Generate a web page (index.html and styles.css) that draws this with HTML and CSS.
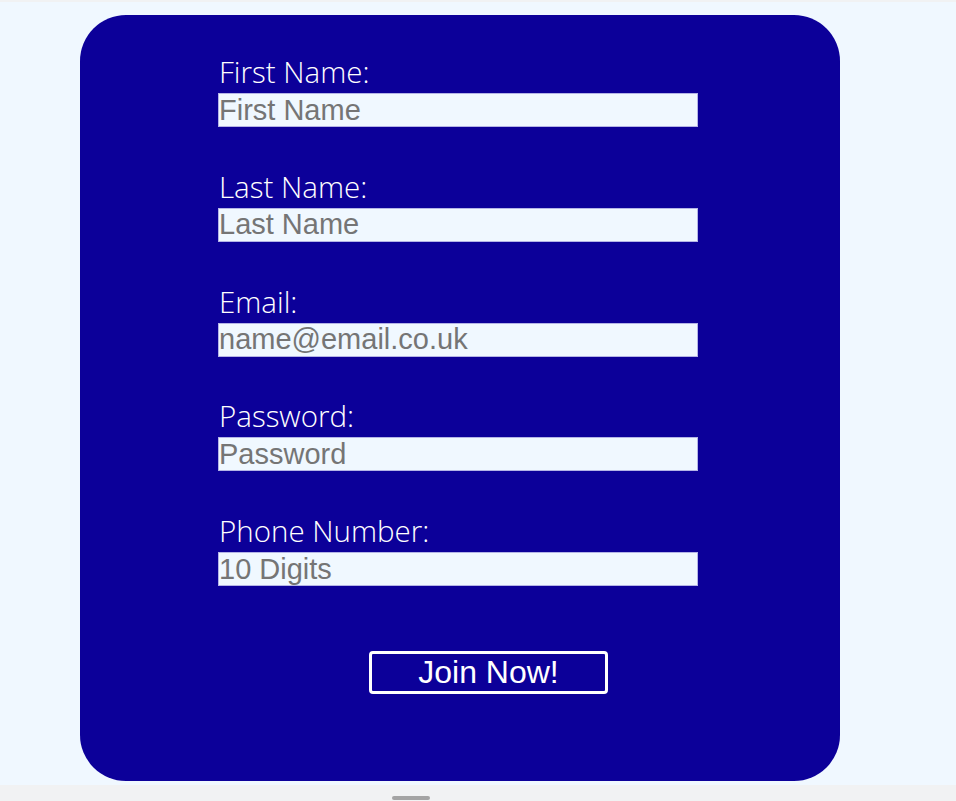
FILE: index.html
```html
<!DOCTYPE html>
<html lang="en">
<head>
    <meta charset="UTF-8">
    <meta name="viewport" content="width=device-width, initial-scale=1.0">
    <title>Join Now</title>
    <link rel="stylesheet" href="styles.css">
</head>
<body>
    <div class="page">
        <form class="signup-card" onsubmit="return false;">
            <div class="field">
                <label for="firstName">First Name:</label>
                <input type="text" id="firstName" placeholder="First Name">
            </div>
            <div class="field">
                <label for="lastName">Last Name:</label>
                <input type="text" id="lastName" placeholder="Last Name">
            </div>
            <div class="field">
                <label for="email">Email:</label>
                <input type="email" id="email" placeholder="name@email.co.uk">
            </div>
            <div class="field">
                <label for="password">Password:</label>
                <input type="password" id="password" placeholder="Password">
            </div>
            <div class="field">
                <label for="phone">Phone Number:</label>
                <input type="tel" id="phone" placeholder="10 Digits">
            </div>
            <button type="submit" class="join-btn">Join Now!</button>
        </form>
    </div>
    <div class="scroll-bar"><span class="scroll-thumb"></span></div>
</body>
</html>
```

FILE: styles.css
```css
* { margin: 0; padding: 0; box-sizing: border-box; }
html, body { background: #f1f2f3; }
body { font-family: "Open Sans", "Liberation Sans", sans-serif; }
.page { margin-top: 2px; height: 783px; background: #f0f8ff; padding-top: 13px; }
.signup-card { margin-left: 80px; width: 760px; height: 766px; background: #0c0099; border-radius: 46px; padding: 41px 0 0 138px; }
.field { margin-bottom: 43.75px; }
.field label { display: block; color: #fff; font-size: 29.5px; font-weight: 300; line-height: 32px; margin-bottom: 5px; padding-left: 1px; }
.field input { display: block; width: 480px; height: 34px; background: #f0f8ff; border: 1px solid #b4b4e6; font-family: "Liberation Sans", Arial, sans-serif; font-size: 29px; color: #333; padding: 0; outline: none; }
.field input::placeholder { color: #757575; }
.join-btn { display: block; margin: 65px 0 0 151px; width: 239px; height: 43px; background: transparent; border: 3px solid #fff; border-radius: 4px; color: #fff; font-family: "Liberation Sans", Arial, sans-serif; font-size: 32px; line-height: 35px; cursor: pointer; }
.scroll-bar { height: 16px; position: relative; background: #f1f2f3; }
.scroll-thumb { position: absolute; left: 392px; top: 11px; width: 38px; height: 4px; border-radius: 2px; background: #a4a4a4; }
```
